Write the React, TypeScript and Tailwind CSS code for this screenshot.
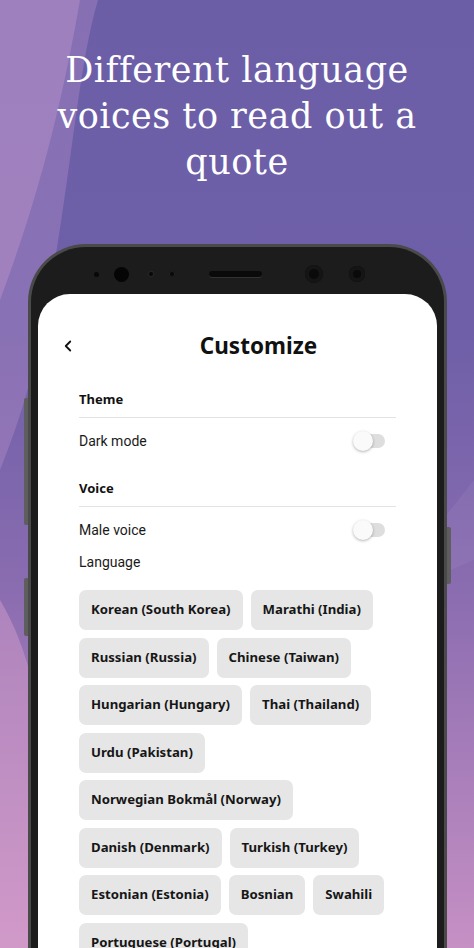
import { ChevronLeft } from "lucide-react";

const languages = [
  "Korean (South Korea)",
  "Marathi (India)",
  "Russian (Russia)",
  "Chinese (Taiwan)",
  "Hungarian (Hungary)",
  "Thai (Thailand)",
  "Urdu (Pakistan)",
  "Norwegian Bokmål (Norway)",
  "Danish (Denmark)",
  "Turkish (Turkey)",
  "Estonian (Estonia)",
  "Bosnian",
  "Swahili",
  "Portuguese (Portugal)",
];

function Toggle() {
  return (
    <div className="relative w-[32px] h-[20px] mr-[11px] flex items-center">
      <div className="ml-[4px] w-[28px] h-[14px] rounded-full bg-[#dedede]" />
      {/* thumb */}
      <div className="absolute left-0 top-0 w-[20px] h-[20px] rounded-full bg-[#fafafa] shadow-[0_1px_3px_rgba(0,0,0,0.3)]" />
    </div>
  );
}

function SectionTitle({ label }: { label: string }) {
  return (
    <>
      <div
        className="h-[20px] flex items-center text-[13px] font-bold text-[#111]"
        style={{ fontFamily: "'Noto Sans', sans-serif" }}
      >
        {label}
      </div>
      <div className="mt-[7px] border-t border-[#e3e3e3]" />
    </>
  );
}

export default function App() {
  return (
    <div
      className="relative w-[474px] h-[948px] overflow-hidden bg-[linear-gradient(180deg,#6b5ea7_0%,#6e5fa8_35%,#8a6cb0_62%,#c690c4_100%)]"
      style={{ fontFamily: "Roboto, 'Noto Sans', sans-serif" }}
    >
      {/* background waves */}
      <svg
        className="absolute inset-0 pointer-events-none"
        width="474"
        height="948"
        viewBox="0 0 474 948"
      >
        <path
          d="M0 0 L98 0 C80 60 72 160 55 260 C40 360 20 420 0 470 Z"
          fill="#c79ad0"
          opacity="0.3"
        />
        <path
          d="M0 0 L80 0 C66 80 45 180 0 300 Z"
          fill="#d8a6d6"
          opacity="0.3"
        />
        <path
          d="M0 948 L0 600 C60 700 40 850 120 948 Z"
          fill="#e0a7d0"
          opacity="0.4"
        />
        <path
          d="M474 480 L474 560 L380 600 Z"
          fill="#ffffff"
          opacity="0.05"
        />
      </svg>

      <div className="relative">
        {/* Headline */}
        <h1
          className="pt-[47px] text-center text-white text-[35px] leading-[46px] tracking-[0.5px] px-[40px]"
          style={{ fontFamily: "'DejaVu Serif', 'Liberation Serif', serif" }}
        >
          Different language voices to read out a quote
        </h1>

        {/* Phone */}
        <div className="relative mt-[59px] ml-[28px] w-[419px] h-[720px] rounded-t-[58px] bg-[#1c1c1c] border-[3px] border-b-0 border-[#4a4a4a] px-[7px]">
          {/* side buttons */}
          <div className="absolute left-[-7px] top-[151px] w-[4px] h-[127px] rounded-l-[2px] bg-[#5e5e5e]" />
          <div className="absolute left-[-7px] top-[331px] w-[4px] h-[58px] rounded-l-[2px] bg-[#5e5e5e]" />
          <div className="absolute right-[-7px] top-[280px] w-[4px] h-[57px] rounded-r-[2px] bg-[#5e5e5e]" />

          {/* Sensors row */}
          <div className="h-[47px] flex items-start pt-[21px]">
            <div className="flex items-center h-[12px] ml-[56px]">
              <span className="w-[5px] h-[5px] rounded-full bg-[#080808]" />
              <span className="ml-[15px] w-[15px] h-[15px] rounded-full bg-[#050505]" />
              <span className="ml-[18px] w-[8px] h-[8px] rounded-full bg-[#080808] shadow-[inset_0_0_0_2px_#222]" />
              <span className="ml-[14px] w-[6px] h-[6px] rounded-full bg-[#080808] shadow-[inset_0_0_0_1px_#222]" />
              <span className="ml-[34px] w-[53px] h-[6px] rounded-full bg-[#0a0a0a] shadow-[0_1px_0_#333]" />
              <span className="ml-[43px] w-[18px] h-[18px] rounded-full bg-[#0a0a0a] shadow-[inset_0_0_0_4px_#151515]" />
              <span className="ml-[26px] w-[16px] h-[16px] rounded-full bg-[#0a0a0a] shadow-[inset_0_0_0_4px_#151515]" />
            </div>
          </div>

          {/* Screen */}
          <div className="bg-white rounded-t-[32px] h-[700px]">
            {/* Header */}
            <div className="pt-[32px] pl-[18px] flex items-center h-[72px]">
              <button className="w-[24px] h-[40px] flex items-center justify-center text-[#111]">
                <ChevronLeft className="w-[18px] h-[18px]" strokeWidth={2.4} />
              </button>
              <h2
                className="flex-1 text-center text-[22.5px] font-bold text-[#111]"
                style={{ fontFamily: "'Noto Sans', sans-serif" }}
              >
                Customize
              </h2>
            </div>

            <div className="px-[41px]">
              {/* Theme */}
              <div className="mt-[24px]">
                <SectionTitle label="Theme" />
              </div>
              <div className="mt-[7px] h-[32px] flex items-center justify-between">
                <span className="text-[14px] text-[#1a1a1a]">Dark mode</span>
                <Toggle />
              </div>

              {/* Voice */}
              <div className="mt-[22px]">
                <SectionTitle label="Voice" />
              </div>
              <div className="mt-[7px] h-[32px] flex items-center justify-between">
                <span className="text-[14px] text-[#1a1a1a]">Male voice</span>
                <Toggle />
              </div>
              <div className="mt-[6px] h-[20px] flex items-center text-[14px] text-[#1a1a1a]">
                Language
              </div>

              {/* Language chips */}
              <div
                className="mt-[18px] flex flex-wrap gap-x-[8px] gap-y-[7.5px]"
                style={{ fontFamily: "'Noto Sans', sans-serif" }}
              >
                {languages.map((lang) => (
                  <button
                    key={lang}
                    className="h-[40px] px-[12px] rounded-[7px] bg-[#e6e6e6] text-[13.2px] font-bold text-[#161616] whitespace-nowrap"
                  >
                    {lang}
                  </button>
                ))}
              </div>
            </div>
          </div>
        </div>
      </div>
    </div>
  );
}
